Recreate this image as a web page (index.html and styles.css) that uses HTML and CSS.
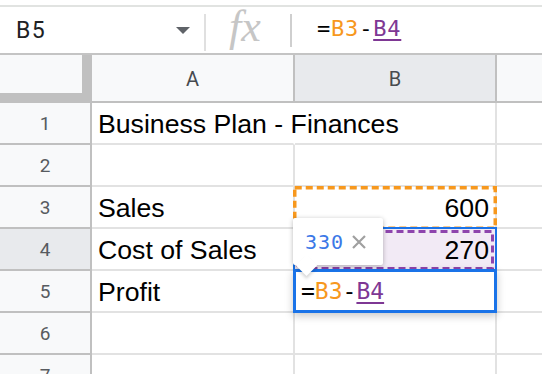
FILE: index.html
```html
<!DOCTYPE html>
<html>
<head>
<meta charset="utf-8">
<link rel="stylesheet" href="styles.css">
</head>
<body>
<div class="topline"></div>
<div class="fbar">
  <div class="namebox">
    <span class="nb-text">B5</span>
    <span class="nb-caret"></span>
  </div>
  <div class="fx-area"><span class="fx">fx</span></div>
  <div class="formula"><span class="eq">=</span><span class="ref3">B3</span><span class="eq">-</span><span class="ref4">B4</span></div>
</div>
<div class="sheet">
  <div class="corner"></div>
  <div class="colh">A</div>
  <div class="colh sel">B</div>
  <div class="colh last"></div>

  <div class="rowh">1</div>
  <div class="cell overflow">Business Plan - Finances</div>
  <div class="cell"></div>
  <div class="cell last"></div>

  <div class="rowh">2</div>
  <div class="cell"></div>
  <div class="cell"></div>
  <div class="cell last"></div>

  <div class="rowh">3</div>
  <div class="cell">Sales</div>
  <div class="cell num">600
    <svg class="dash dash-b3" width="204" height="44" viewBox="0 0 204 44"><rect x="1.75" y="1.75" width="200.5" height="40.5" fill="none" stroke="#f7981d" stroke-width="3.5" stroke-dasharray="7 4"/></svg>
  </div>
  <div class="cell last"></div>

  <div class="rowh sel">4</div>
  <div class="cell">Cost of Sales</div>
  <div class="cell num b4">270
    <div class="selframe"></div>
    <svg class="dash dash-b4" width="198" height="40" viewBox="0 0 198 40"><rect x="1.5" y="1.5" width="195" height="37" fill="none" stroke="#8e44ad" stroke-width="3" stroke-dasharray="7 4"/></svg>
  </div>
  <div class="cell last"></div>

  <div class="rowh">5</div>
  <div class="cell">Profit</div>
  <div class="cell b5">
    <div class="editor"><span class="eq">=</span><span class="ref3">B3</span><span class="eq">-</span><span class="ref4">B4</span></div>
    <div class="tip">
      <span class="tip-val">330</span>
      <svg class="tip-x" width="16" height="16" viewBox="0 0 16 16"><path d="M2 2 L14 14 M14 2 L2 14" stroke="#a0a0a0" stroke-width="2.2" fill="none"/></svg>
      <span class="tip-arrow"></span>
    </div>
  </div>
  <div class="cell last"></div>

  <div class="rowh">6</div>
  <div class="cell"></div>
  <div class="cell"></div>
  <div class="cell last"></div>

  <div class="rowh">7</div>
  <div class="cell"></div>
  <div class="cell"></div>
  <div class="cell last"></div>
</div>
</body>
</html>
```
FILE: styles.css
```css
html, body {
  margin: 0;
  padding: 0;
  background: #fff;
  overflow: hidden;
  width: 542px;
  height: 374px;
}
body {
  font-family: "Liberation Sans", Arial, sans-serif;
}
.topline {
  height: 5px;
  border-bottom: 2px solid #e1e3e1;
}
.fbar {
  height: 48px;
  box-sizing: border-box;
  border-bottom: 2px solid #c4c4c4;
  display: flex;
  align-items: stretch;
}
.namebox {
  width: 206px;
  box-sizing: border-box;
  padding-left: 16px;
  padding-right: 14px;
  display: flex;
  align-items: center;
  justify-content: space-between;
  border-right: 2px solid #e0e0e0;
  margin: 7px 0 2px 0;
}
.nb-text {
  font-family: Roboto, "Liberation Sans", sans-serif;
  font-size: 23px;
  letter-spacing: 1.5px;
  color: #202124;
  margin-top: -4px;
}
.nb-caret {
  width: 0;
  height: 0;
  border-left: 7px solid transparent;
  border-right: 7px solid transparent;
  border-top: 7px solid #5f6368;
  margin-top: -4px;
}
.fx-area {
  width: 86px;
  box-sizing: border-box;
  display: flex;
  align-items: center;
  padding-left: 23px;
  border-right: 2px solid #cfcfcf;
  margin: 7px 0 6px 0;
}
.fx {
  font-family: "Liberation Serif", "Times New Roman", serif;
  font-style: italic;
  font-size: 44px;
  color: #c6c6c6;
  margin-top: -9px;
}
.formula {
  padding-left: 25px;
  display: flex;
  align-items: center;
  font-family: "DejaVu Sans Mono", monospace;
  font-size: 22px;
  letter-spacing: 0.8px;
  color: #000;
  margin-top: -4px;
}
.eq { color: #000; }
.ref3 { color: #f7981d; }
.ref4 {
  color: #7e3794;
  text-decoration: underline;
  text-decoration-thickness: 2px;
  text-underline-offset: 3px;
}

.sheet {
  display: grid;
  grid-template-columns: 92px 203px 202px 1fr;
  grid-template-rows: 48px;
  grid-auto-rows: 42px;
}
.corner {
  background: #f8f9fa;
  border-right: 10px solid #c0c0c0;
  border-bottom: 10px solid #c0c0c0;
  box-sizing: border-box;
}
.colh {
  background: #f8f9fa;
  border-right: 2px solid #c0c0c0;
  border-bottom: 2px solid #c0c0c0;
  box-sizing: border-box;
  display: flex;
  align-items: center;
  justify-content: center;
  font-family: Roboto, "Liberation Sans", sans-serif;
  font-size: 20px;
  color: #474a4f;
  padding-top: 1px;
}
.colh.sel { background: #e8eaed; }
.colh.last { border-right: none; }
.rowh {
  background: #f8f9fa;
  border-right: 2px solid #c0c0c0;
  border-bottom: 2px solid #c0c0c0;
  box-sizing: border-box;
  display: flex;
  align-items: center;
  justify-content: center;
  font-family: Roboto, "Liberation Sans", sans-serif;
  font-size: 19px;
  color: #575b60;
}
.rowh.sel { background: #e8eaed; }
.cell {
  position: relative;
  border-right: 2px solid #e2e2e2;
  border-bottom: 2px solid #e2e2e2;
  box-sizing: border-box;
  display: flex;
  align-items: flex-end;
  padding: 0 6px 3px 6px;
  font-size: 26.67px;
  color: #000;
  white-space: nowrap;
}
.cell.last { border-right: none; }
.cell.overflow {
  overflow: visible;
  border-right-color: #fff;
  z-index: 1;
}
.cell.num { justify-content: flex-end; }
.cell.b4 { background: #f2eaf5; }
.dash {
  position: absolute;
  display: block;
}
.dash-b3 {
  left: -2px;
  top: -1px;
}
.dash-b4 {
  left: 1px;
  top: 1px;
}
.selframe {
  position: absolute;
  left: -2px;
  top: -2px;
  width: 204px;
  height: 86px;
  box-sizing: border-box;
  border: 2px solid #1a73e8;
}
.editor {
  position: absolute;
  left: -2px;
  top: -2px;
  width: 204px;
  height: 44px;
  box-sizing: border-box;
  border: 3px solid #1a73e8;
  background: #fff;
  box-shadow: 0 3px 8px rgba(0,0,0,0.22);
  display: flex;
  align-items: center;
  padding-left: 5px;
  font-family: "DejaVu Sans Mono", monospace;
  font-size: 23px;
  z-index: 2;
}
.tip {
  position: absolute;
  left: -2px;
  top: -53px;
  width: 90px;
  height: 47px;
  background: #fff;
  border-radius: 2px;
  box-shadow: 0 1px 5px rgba(0,0,0,0.28);
  display: flex;
  align-items: center;
  padding-left: 12px;
  box-sizing: border-box;
  z-index: 3;
}
.tip-val {
  font-family: "DejaVu Sans Mono", monospace;
  font-size: 20px;
  letter-spacing: 1px;
  color: #3b78e7;
  position: relative;
  z-index: 2;
}
.tip-x {
  margin-left: 7px;
  position: relative;
  z-index: 2;
}
.tip-arrow {
  position: absolute;
  left: 6px;
  bottom: -8px;
  width: 15px;
  height: 15px;
  background: #fff;
  transform: rotate(45deg);
  box-shadow: 2px 2px 3px rgba(0,0,0,0.15);
  z-index: 1;
}
```
